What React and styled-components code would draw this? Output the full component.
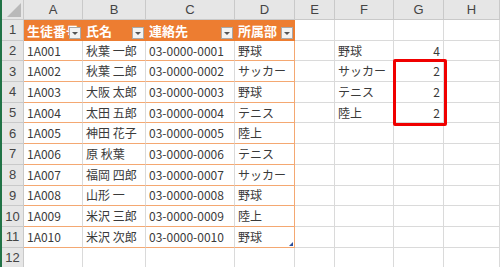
import React from 'react'
import styled, { createGlobalStyle, css } from 'styled-components'

const Global = createGlobalStyle`
  html, body { margin: 0; padding: 0; background: #fff; }
  body { font-family: 'Noto Sans CJK JP', 'Noto Sans', sans-serif; }
`

const ROW_H = 20.7
const HEAD_H = 20
const COLS = '22px 59px 63px 89px 60px 40px 59px 50px 1fr'

const Sheet = styled.div`
  width: 500px;
  height: 267px;
  overflow: hidden;
  border-left: 2px solid #217346;
  box-sizing: border-box;
  display: grid;
  grid-template-columns: ${COLS};
  grid-template-rows: ${HEAD_H}px repeat(12, ${ROW_H}px);
  font-size: 12px;
  color: #3a3a3a;
`

const Cell = styled.div`
  position: relative;
  box-sizing: border-box;
  border-right: 1px solid #dadada;
  border-bottom: 1px solid #dadada;
  display: flex;
  align-items: center;
  padding: 0 3px;
  white-space: nowrap;
  overflow: visible;
  line-height: 1;
  ${p => p.$right && css`justify-content: flex-end;`}
  ${p => p.$table && css`border-bottom-color: #f4a872;`}
  ${p => p.$edge && css`border-right-color: #f4a872;`}
`

const Head = styled.div`
  box-sizing: border-box;
  background: #e6e6e6;
  border-right: 1px solid #c9c9c9;
  border-bottom: 1px solid #c9c9c9;
  color: #444;
  display: flex;
  align-items: center;
  justify-content: center;
  font-family: 'Liberation Sans', 'Noto Sans', sans-serif;
  font-size: 13px;
`

const Corner = styled(Head)`
  position: relative;
  &::after {
    content: '';
    position: absolute;
    right: 2px;
    bottom: 2px;
    border-left: 14px solid transparent;
    border-bottom: 14px solid #b9b9b9;
  }
`

const TitleCell = styled.div`
  position: relative;
  box-sizing: border-box;
  background: #ed7d31;
  color: #fff;
  font-weight: 700;
  font-size: 13px;
  display: flex;
  align-items: center;
  padding: 0 3px;
  white-space: nowrap;
  overflow: hidden;
  line-height: 1;
`

const Filter = styled.span`
  position: absolute;
  right: 2px;
  bottom: 2px;
  width: 12px;
  height: 12px;
  box-sizing: border-box;
  background: #f3f3f3;
  border: 1px solid #a9a9a9;
  display: flex;
  align-items: center;
  justify-content: center;
  &::after {
    content: '';
    border-left: 3px solid transparent;
    border-right: 3px solid transparent;
    border-top: 3px solid #555;
    margin-top: 1px;
  }
`

const Handle = styled.span`
  position: absolute;
  right: 1px;
  bottom: 1px;
  border-left: 4px solid transparent;
  border-bottom: 4px solid #2b4f9c;
`

const Mark = styled.div`
  position: absolute;
  left: -1px;
  top: -2px;
  width: 54px;
  height: 67px;
  box-sizing: border-box;
  border: 3px solid #f00000;
  border-radius: 2px;
  z-index: 2;
`

const students = [
  ['1A001', '秋葉 一郎', '03-0000-0001', '野球'],
  ['1A002', '秋葉 二郎', '03-0000-0002', 'サッカー'],
  ['1A003', '大阪 太郎', '03-0000-0003', '野球'],
  ['1A004', '太田 五郎', '03-0000-0004', 'テニス'],
  ['1A005', '神田 花子', '03-0000-0005', '陸上'],
  ['1A006', '原 秋葉', '03-0000-0006', 'テニス'],
  ['1A007', '福岡 四郎', '03-0000-0007', 'サッカー'],
  ['1A008', '山形 一', '03-0000-0008', '野球'],
  ['1A009', '米沢 三郎', '03-0000-0009', '陸上'],
  ['1A010', '米沢 次郎', '03-0000-0010', '野球'],
]

const counts = [
  ['野球', 4],
  ['サッカー', 2],
  ['テニス', 2],
  ['陸上', 2],
]

const letters = ['A', 'B', 'C', 'D', 'E', 'F', 'G', 'H']
const titles = ['生徒番号', '氏名', '連絡先', '所属部']

const App = () => {
  return (
    <>
      <Global />
      <Sheet>
        <Corner />
        {letters.map(l => <Head key={l}>{l}</Head>)}

        <Head>1</Head>
        {titles.map(t => (
          <TitleCell key={t}>
            {t}
            <Filter />
          </TitleCell>
        ))}
        <Cell /><Cell /><Cell /><Cell />

        {students.map((s, i) => {
          const c = counts[i]
          return (
            <React.Fragment key={s[0]}>
              <Head>{i + 2}</Head>
              <Cell $table>{s[0]}</Cell>
              <Cell $table>{s[1]}</Cell>
              <Cell $table>{s[2]}</Cell>
              <Cell $table $edge>
                {s[3]}
                {i === 9 && <Handle />}
              </Cell>
              <Cell />
              <Cell>{c ? c[0] : ''}</Cell>
              <Cell $right>
                {c ? c[1] : ''}
                {i === 1 && <Mark />}
              </Cell>
              <Cell />
            </React.Fragment>
          )
        })}

        <Head>12</Head>
        <Cell /><Cell /><Cell /><Cell /><Cell /><Cell /><Cell /><Cell />
      </Sheet>
    </>
  )
}

export default App
